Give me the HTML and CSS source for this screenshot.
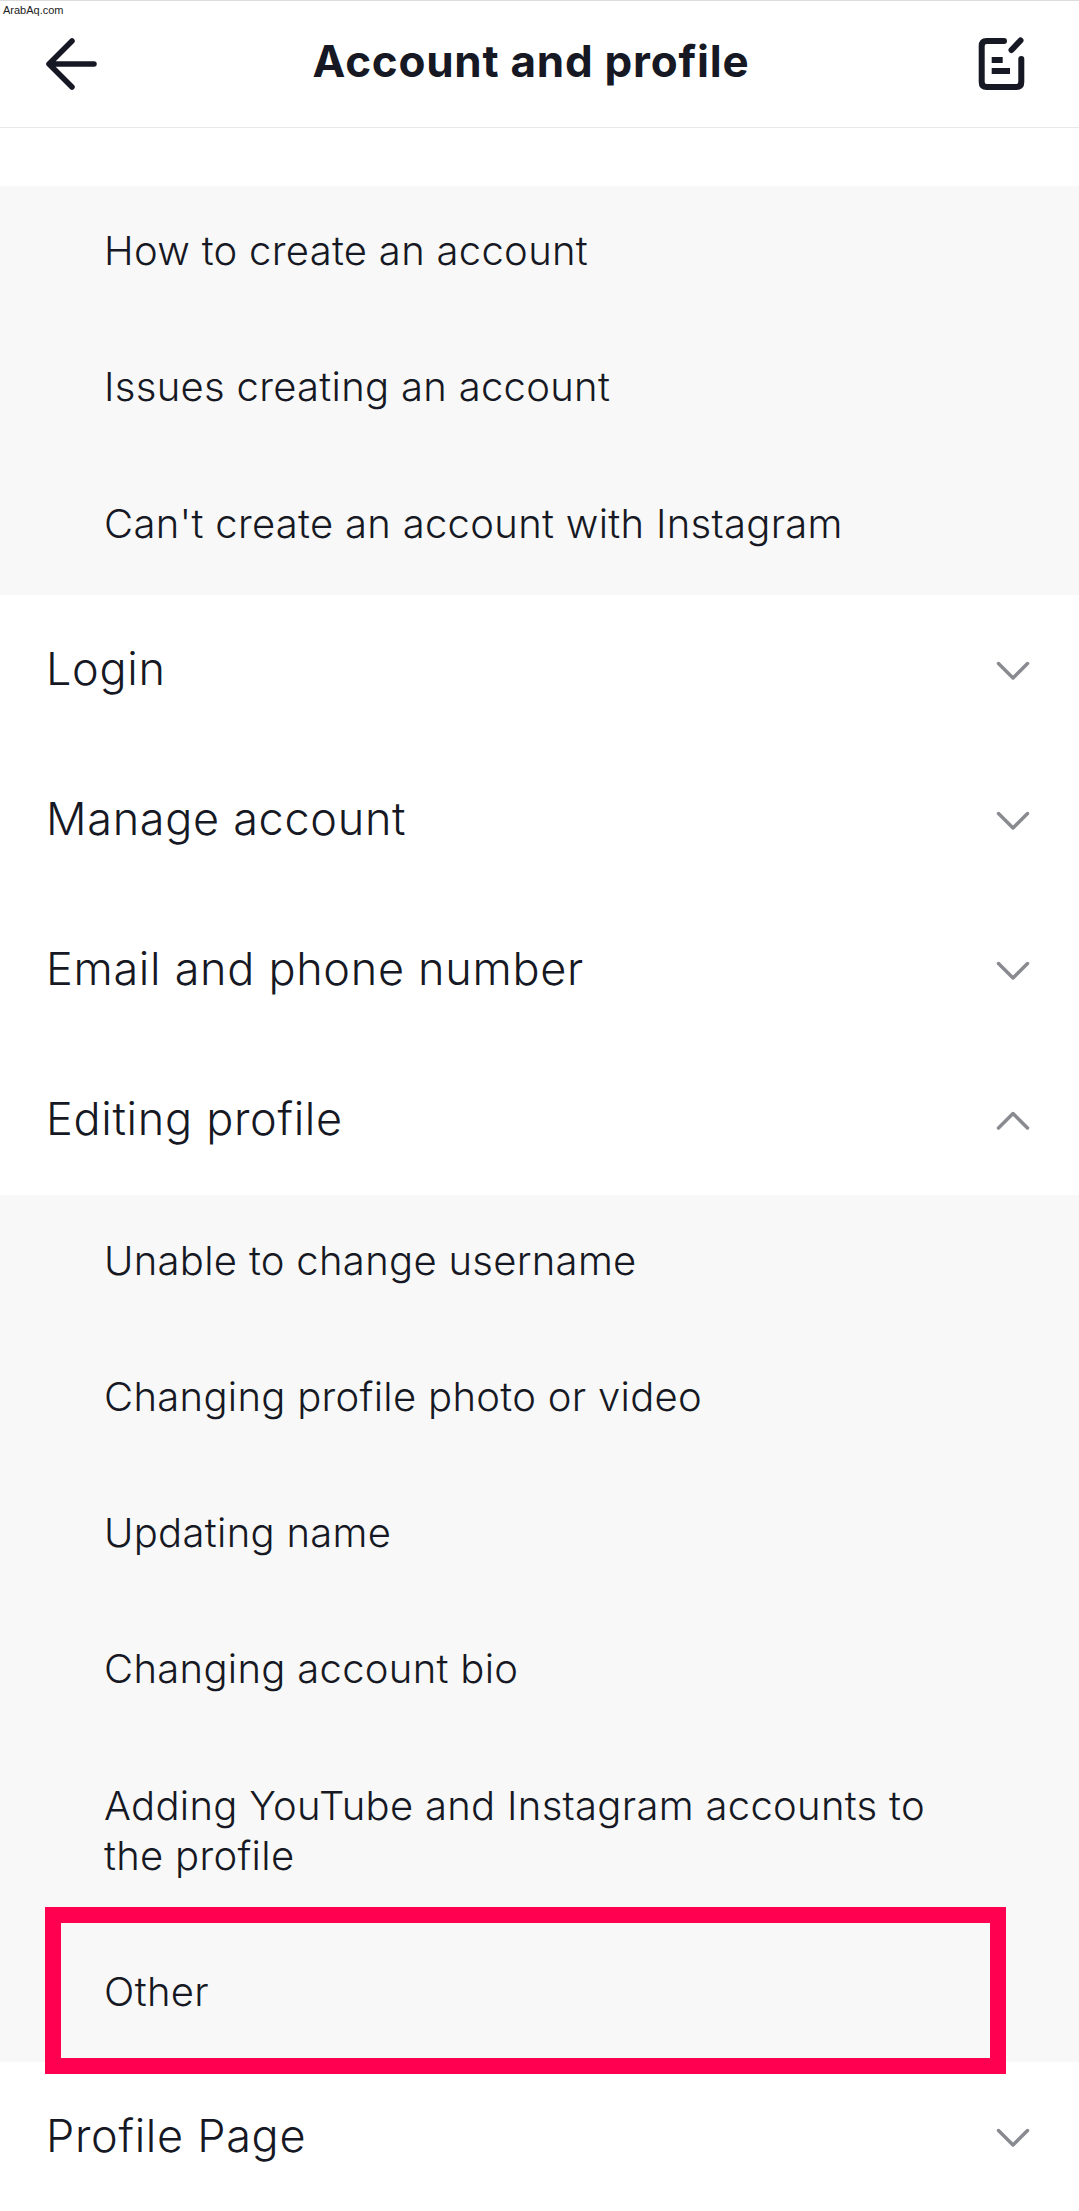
FILE: index.html
```html
<!DOCTYPE html>
<html lang="en">

<head>
  <meta charset="UTF-8">
  <title>Account and profile</title>
  <link rel="stylesheet" href="styles.css">
</head>

<body>
  <div class="watermark">ArabAq.com</div>

  <header class="topbar">
    <svg class="back" width="54" height="54" viewBox="0 0 54 54">
      <path d="M49 27H4M27 4L4 27L27 50" />
    </svg>
    <h1 class="title">Account and profile</h1>
    <svg class="edit" width="50" height="56" viewBox="0 0 50 56">
      <path d="M27 6H9.7Q4.7 6 4.7 11V47Q4.7 52 9.7 52H39.3Q44.3 52 44.3 47V24" />
      <path d="M34.5 15L43.5 5.5" />
      <path class="bars" d="M14.7 25H25.7M14.7 36H33" />
    </svg>
  </header>

  <main class="list">
    <ul class="sub first">
      <li>How to create an account</li>
      <li>Issues creating an account</li>
      <li>Can't create an account with Instagram</li>
    </ul>

    <div class="row">
      <span>Login</span>
      <svg class="chev" width="38" height="22" viewBox="0 0 38 22"><path d="M4.5 3.5L19 18L33.5 3.5" /></svg>
    </div>
    <div class="row">
      <span>Manage account</span>
      <svg class="chev" width="38" height="22" viewBox="0 0 38 22"><path d="M4.5 3.5L19 18L33.5 3.5" /></svg>
    </div>
    <div class="row">
      <span>Email and phone number</span>
      <svg class="chev" width="38" height="22" viewBox="0 0 38 22"><path d="M4.5 3.5L19 18L33.5 3.5" /></svg>
    </div>
    <div class="row">
      <span>Editing profile</span>
      <svg class="chev" width="38" height="22" viewBox="0 0 38 22"><path d="M4.5 18L19 3.5L33.5 18" /></svg>
    </div>

    <ul class="sub second">
      <li>Unable to change username</li>
      <li>Changing profile photo or video</li>
      <li>Updating name</li>
      <li>Changing account bio</li>
      <li>Adding YouTube and Instagram accounts to the profile</li>
      <li class="marked">Other</li>
    </ul>

    <div class="row">
      <span>Profile Page</span>
      <svg class="chev" width="38" height="22" viewBox="0 0 38 22"><path d="M4.5 3.5L19 18L33.5 3.5" /></svg>
    </div>
  </main>
</body>

</html>
```

FILE: styles.css
```css
html,
body {
  margin: 0;
  height: 2211px;
  overflow: hidden;
}

body {
  position: relative;
  background: #fff;
  color: #161823;
  font-family: Inter, "Noto Sans", sans-serif;
  font-weight: 300;
}

.watermark {
  position: absolute;
  left: 3px;
  top: 4px;
  font-family: "Liberation Sans", Arial, sans-serif;
  font-size: 11px;
  font-weight: 400;
  line-height: 13px;
  color: #222;
}

.topbar {
  display: flex;
  align-items: center;
  justify-content: space-between;
  box-sizing: border-box;
  height: 128px;
  padding: 0 52px 0 45px;
  border-top: 1px solid #ddd;
  border-bottom: 1px solid #e8e8e9;
}

.title {
  margin: 0 0 6px -14px;
  font-size: 44px;
  font-weight: 700;
  line-height: 116px;
  letter-spacing: 0.75px;
}

.back path,
.edit path {
  fill: none;
  stroke: #161823;
  stroke-width: 5.5;
  stroke-linecap: round;
  stroke-linejoin: round;
}

.edit {
  margin-bottom: 2px;
}

.edit path {
  stroke-width: 6;
}

.edit .bars {
  stroke-linecap: butt;
}

.list {
  padding-top: 58px;
}

.sub {
  margin: 0;
  padding: 40px 100px 46px 104px;
  list-style: none;
  background: #f8f8f8;
  display: flex;
  flex-direction: column;
  gap: 86.3px;
  font-size: 40px;
  line-height: 50px;
  letter-spacing: 0.3px;
}

.sub.second {
  padding-top: 41px;
  padding-bottom: 0;
  height: 867px;
  box-sizing: border-box;
}

.marked {
  position: relative;
}

.marked::after {
  content: "";
  position: absolute;
  left: -59px;
  right: -27px;
  top: -60px;
  height: 135px;
  border: 16px solid #ff0050;
}

.row {
  display: flex;
  align-items: center;
  justify-content: space-between;
  height: 150px;
  padding: 0 47px 0 46px;
  font-size: 45px;
  letter-spacing: 0.7px;
}

.row span {
  margin-bottom: 3px;
}

.chev {
  margin-top: 3px;
}

.chev path {
  fill: none;
  stroke: #8a8b91;
  stroke-width: 3.5;
  stroke-linecap: round;
  stroke-linejoin: round;
}
```
